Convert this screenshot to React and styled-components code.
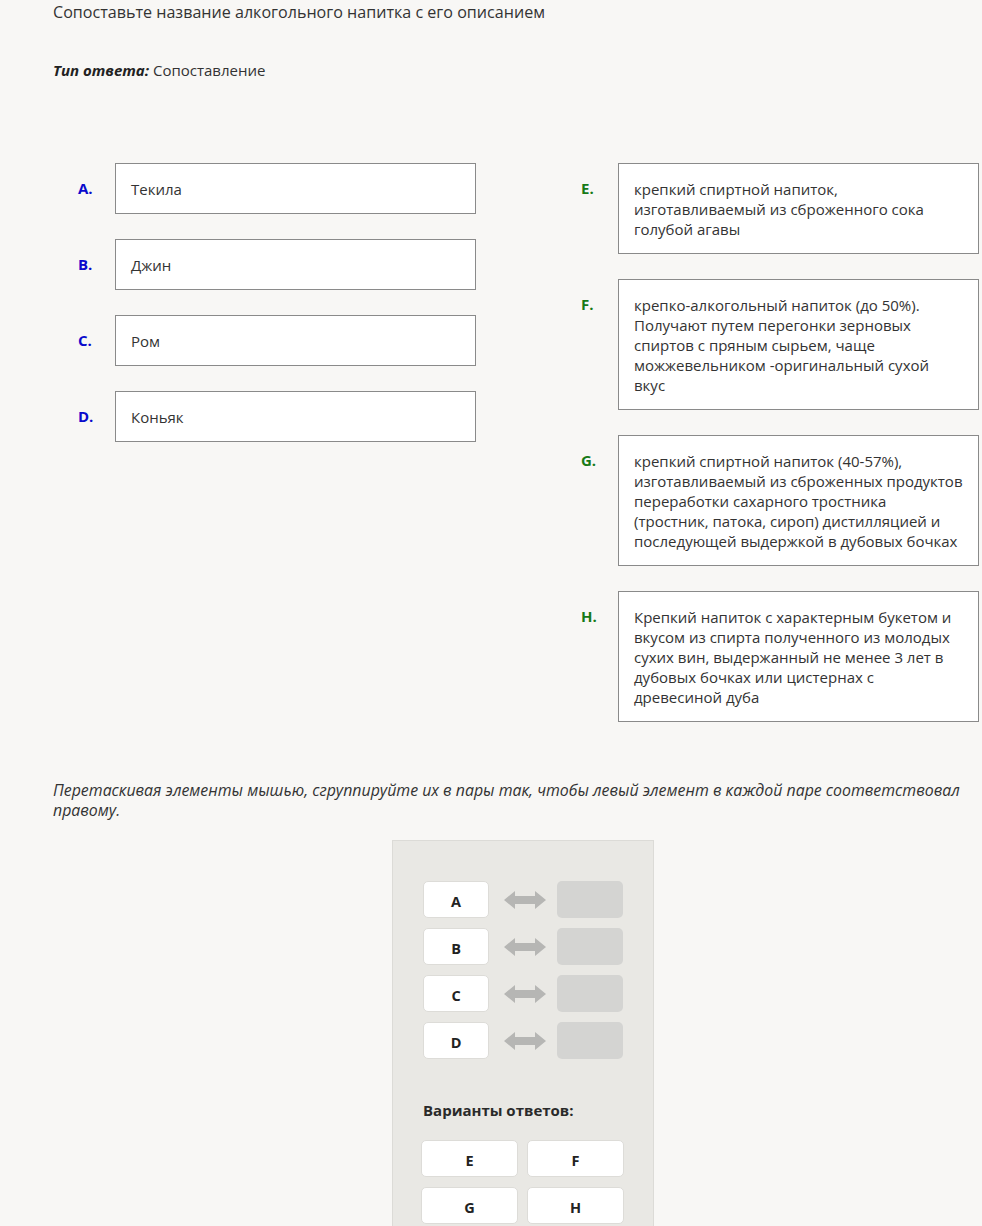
import React from "react";
import styled, { createGlobalStyle } from "styled-components";

const Global = createGlobalStyle`
  html, body { margin: 0; padding: 0; background: #f8f7f5; }
  body { font-family: "Open Sans", "Noto Sans", sans-serif; color: #333; }
`;

const Page = styled.div`
  padding: 0 0 0 53px;
  width: 926px;
`;

const Title = styled.div`
  font-size: 16.1px;
  line-height: 24px;
  color: #333;
`;

const AnswerType = styled.div`
  margin-top: 34px;
  font-size: 15px;
  line-height: 24px;
  color: #333;
  b { font-style: italic; font-weight: 700; color: #222; }
`;

const Columns = styled.div`
  margin-top: 81px;
  display: grid;
  grid-template-columns: 423px 423px;
  column-gap: 80px;
  align-items: start;
`;

const Column = styled.div`
  display: flex;
  flex-direction: column;
  gap: 25px;
`;

const Item = styled.div`
  display: flex;
  align-items: flex-start;
`;

const Label = styled.div`
  width: 62px;
  flex: none;
  box-sizing: border-box;
  padding: 15px 0 0 25px;
  font-size: 15px;
  line-height: 20px;
  font-weight: 700;
  color: ${(p) => p.$color};
`;

const Box = styled.div`
  flex: 1;
  background: #fff;
  border: 1px solid #8a8a8a;
  padding: 15px 15px 14px;
  font-size: 15px;
  line-height: 20px;
  color: #333;
`;

const Hint = styled.div`
  margin-top: 58px;
  font-size: 15.9px;
  line-height: 20px;
  font-style: italic;
  color: #333;
`;

const Panel = styled.div`
  margin: 20px 0 0 339px;
  width: 230px;
  background: #e9e8e4;
  border: 1px solid #dcdbd7;
  border-bottom: none;
  padding: 40px 0 20px 30px;
  box-sizing: content-box;
`;

const Pairs = styled.div`
  display: flex;
  flex-direction: column;
  gap: 10px;
`;

const Pair = styled.div`
  display: flex;
  align-items: center;
`;

const Chip = styled.div`
  width: ${(p) => p.$w}px;
  height: 37px;
  box-sizing: border-box;
  background: #fff;
  border: 1px solid #dddcd8;
  border-radius: 5px;
  display: flex;
  align-items: center;
  justify-content: center;
  padding-top: 4px;
  font-size: 14.5px;
  font-weight: 700;
  color: #222;
`;

const Slot = styled.div`
  width: 66px;
  height: 37px;
  box-sizing: border-box;
  background: #d4d4d2;
  border-radius: 5px;
`;

const ArrowWrap = styled.div`
  width: 68px;
  display: flex;
  justify-content: flex-start;
  padding-left: 15px;
  box-sizing: border-box;
`;

const OptionsTitle = styled.div`
  margin-top: 41px;
  font-size: 15px;
  line-height: 20px;
  font-weight: 700;
  color: #2a2a2a;
`;

const Options = styled.div`
  margin: 20px 0 0 -2px;
  display: grid;
  grid-template-columns: 97px 97px;
  gap: 10px 9px;
`;

const Arrow = () => (
  <svg width="42" height="20" viewBox="0 0 42 20">
    <path
      d="M0 10 L11 1 L11 6 L31 6 L31 1 L42 10 L31 19 L31 14 L11 14 L11 19 Z"
      fill="#b6b6b4"
    />
  </svg>
);

const left = [
  ["A.", "Текила"],
  ["B.", "Джин"],
  ["C.", "Ром"],
  ["D.", "Коньяк"],
];

const right = [
  ["E.", "крепкий спиртной напиток, изготавливаемый из сброженного сока голубой агавы"],
  ["F.", "крепко-алкогольный напиток (до 50%). Получают путем перегонки зерновых спиртов с пряным сырьем, чаще можжевельником -оригинальный сухой вкус"],
  ["G.", "крепкий спиртной напиток (40-57%), изготавливаемый из сброженных продуктов переработки сахарного тростника (тростник, патока, сироп) дистилляцией и последующей выдержкой в дубовых бочках"],
  ["H.", "Крепкий напиток с характерным букетом и вкусом из спирта полученного из молодых сухих вин, выдержанный не менее 3 лет в дубовых бочках или цистернах с древесиной дуба"],
];

export default function App() {
  return (
    <>
      <Global />
      <Page>
        <Title>Сопоставьте название алкогольного напитка с его описанием</Title>
        <AnswerType>
          <b>Тип ответа:</b> Сопоставление
        </AnswerType>
        <Columns>
          <Column>
            {left.map(([l, t]) => (
              <Item key={l}>
                <Label $color="#0a0acc">{l}</Label>
                <Box>{t}</Box>
              </Item>
            ))}
          </Column>
          <Column>
            {right.map(([l, t]) => (
              <Item key={l}>
                <Label $color="#177a17">{l}</Label>
                <Box>{t}</Box>
              </Item>
            ))}
          </Column>
        </Columns>
        <Hint>
          Перетаскивая элементы мышью, сгруппируйте их в пары так, чтобы левый элемент в каждой паре соответствовал правому.
        </Hint>
        <Panel>
          <Pairs>
            {["A", "B", "C", "D"].map((k) => (
              <Pair key={k}>
                <Chip $w={66}>{k}</Chip>
                <ArrowWrap>
                  <Arrow />
                </ArrowWrap>
                <Slot />
              </Pair>
            ))}
          </Pairs>
          <OptionsTitle>Варианты ответов:</OptionsTitle>
          <Options>
            {["E", "F", "G", "H"].map((k) => (
              <Chip key={k} $w={97}>{k}</Chip>
            ))}
          </Options>
        </Panel>
      </Page>
    </>
  );
}
